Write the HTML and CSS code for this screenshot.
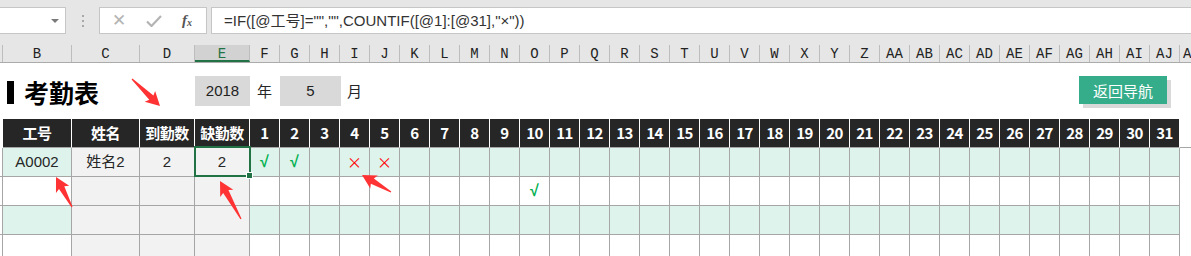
FILE: index.html
```html
<!DOCTYPE html>
<html lang="zh-CN">
<head>
    <meta charset="UTF-8">
    <meta name="viewport" content="width=device-width, initial-scale=1.0">
    <title>考勤表</title>
    <link rel="stylesheet" href="styles.css">
</head>
<body>
    <div class="formula-bar">
        <div class="name-box"><span class="drop"></span></div>
        <div class="grip"><i></i><i></i><i></i></div>
        <div class="fx-box">
            <span class="fx-btn">✕</span>
            <span class="fx-btn">
                <svg width="16" height="12" viewBox="0 0 16 12"><path d="M1 6.5 L5.5 11 L15 1" fill="none" stroke="#b4b4b4" stroke-width="2.2"/></svg>
            </span>
            <span class="fx-label">f<sub>x</sub></span>
        </div>
        <div class="formula">=IF([@工号]="","",COUNTIF([@1]:[@31],"×"))</div>
    </div>

    <div class="grid col-heads" id="col-heads"></div>

    <div class="grid title-row">
        <div class="title"><span class="title-mark"></span>考勤表</div>
        <div class="input-box year">2018</div>
        <div class="unit unit-year">年</div>
        <div class="input-box month">5</div>
        <div class="unit unit-month">月</div>
        <button class="nav-btn">返回导航</button>
    </div>

    <div class="grid sheet" id="sheet"></div>

    <svg class="arrows" width="1191" height="256">
        <g id="arrow-shape">
            <polygon points="0,0 -14,-7.5 -12,-3 -40,-0.6 -40,0.6 -12,3 -14,7.5" fill="#ff3333"/>
        </g>
    </svg>

    <script>
        const letters = ['A', 'B', 'C', 'D', 'E'];
        const abc = 'ABCDEFGHIJKLMNOPQRSTUVWXYZ';
        for (let i = 5; i < 37; i++) {
            letters.push(i < 26 ? abc[i] : 'A' + abc[i - 26]);
        }

        // column letters
        let heads = document.getElementById('col-heads');
        letters.forEach((l, i) => {
            let d = document.createElement('div');
            d.className = 'col-head' + (l === 'E' ? ' active' : '');
            d.textContent = i === 0 ? '' : (i === 36 ? 'A' : l);
            heads.appendChild(d);
        });

        // table data
        let rows = [
            { id: 'A0002', name: '姓名2', come: '2', miss: '2', days: { 1: '√', 2: '√', 4: '×', 5: '×' } },
            { days: { 10: '√' } },
            { days: {} },
            { days: {} }
        ];

        let sheet = document.getElementById('sheet');
        function cell(cls, text) {
            let d = document.createElement('div');
            d.className = 'cell ' + cls;
            if (text) d.textContent = text;
            sheet.appendChild(d);
            return d;
        }

        // header row
        cell('blank', '');
        ['工号', '姓名', '到勤数', '缺勤数'].forEach(t => cell('th', t));
        for (let day = 1; day <= 31; day++) cell('th', day);
        cell('blank head-tail', '');

        rows.forEach((r, i) => {
            let band = i % 2 === 0 ? 'band' : '';
            cell('td edge', '');
            cell('td ' + band, r.id || '');
            cell('td grey', r.name || '');
            cell('td grey', r.come || '');
            let miss = cell('td grey', r.miss || '');
            if (i === 0) miss.classList.add('selected');
            for (let day = 1; day <= 31; day++) {
                let mark = r.days[day] || '';
                let kind = mark === '√' ? ' ok' : mark === '×' ? ' no' : '';
                cell('td ' + band + kind, mark);
            }
            cell('blank', '');
        });

        // arrows: [tailX, tailY, tipX, tipY]
        let arrows = [[132, 79, 160, 106], [72, 207, 56, 177], [241, 219, 220, 181], [391, 192, 362, 175]];
        let svg = document.querySelector('.arrows');
        let proto = document.getElementById('arrow-shape');
        arrows.forEach(a => {
            let dx = a[2] - a[0], dy = a[3] - a[1];
            let len = Math.sqrt(dx * dx + dy * dy);
            let ang = Math.atan2(dy, dx) * 180 / Math.PI;
            let g = proto.cloneNode(true);
            g.removeAttribute('id');
            g.querySelector('polygon').setAttribute('points',
                `0,0 -14,-7.5 -12,-3 ${-len},-0.6 ${-len},0.6 -12,3 -14,7.5`);
            g.setAttribute('transform', `translate(${a[2]},${a[3]}) rotate(${ang})`);
            svg.appendChild(g);
        });
        proto.remove();
    </script>
</body>
</html>
```

FILE: styles.css
```css
body {
    margin: 0;
    width: 1191px;
    height: 256px;
    overflow: hidden;
    position: relative;
    background: #ffffff;
    font-family: "Liberation Sans", "Noto Sans CJK SC", sans-serif;
    color: #262626;
}

/* formula bar */
.formula-bar {
    display: flex;
    align-items: flex-start;
    height: 42px;
    padding-top: 7px;
    box-sizing: border-box;
    background: #e6e6e6;
}
.name-box {
    width: 67px;
    height: 27px;
    margin-left: -1px;
    box-sizing: border-box;
    background: #fff;
    border: 1px solid #c6c6c6;
    position: relative;
}
.drop {
    position: absolute;
    right: 6px;
    top: 11px;
    border-left: 4px solid transparent;
    border-right: 4px solid transparent;
    border-top: 4px solid #7a7a7a;
}
.grip {
    width: 33px;
    height: 27px;
    display: flex;
    flex-direction: column;
    align-items: center;
    justify-content: center;
    gap: 3px;
}
.grip i {
    width: 2px;
    height: 2px;
    background: #a8a8a8;
}
.fx-box {
    width: 108px;
    height: 27px;
    box-sizing: border-box;
    background: #fff;
    border: 1px solid #c6c6c6;
    display: flex;
    align-items: center;
    padding-left: 11px;
    gap: 19px;
}
.fx-btn {
    width: 16px;
    text-align: center;
    color: #b4b4b4;
    font-size: 17px;
    display: flex;
    align-items: center;
    justify-content: center;
}
.fx-label {
    font-family: "Liberation Serif", serif;
    font-style: italic;
    font-weight: bold;
    font-size: 15px;
    color: #555;
    margin-left: 1px;
}
.fx-label sub {
    font-size: 10px;
    vertical-align: -1px;
}
.formula {
    flex: 1;
    height: 27px;
    margin-left: 4px;
    box-sizing: border-box;
    background: #fff;
    border: 1px solid #c6c6c6;
    border-right: none;
    padding-left: 12px;
    font-size: 15px;
    line-height: 25px;
    color: #333;
}

/* shared column grid */
.grid {
    display: grid;
    grid-template-columns: 3px 69px 68px 55px 55px repeat(31, 30px) 11px;
}

/* column letters */
.col-heads {
    height: 21px;
    background: #e6e6e6;
    border-bottom: 1px solid #ababab;
    box-sizing: border-box;
}
.col-head {
    margin-top: 3px;
    height: 17px;
    border-right: 1px solid #bdbdbd;
    text-align: center;
    font-family: "Liberation Mono", monospace;
    font-size: 14px;
    line-height: 18px;
    color: #222;
    overflow: hidden;
}
.col-head:last-child {
    border-right: none;
    text-align: left;
    padding-left: 3px;
}
.col-head.active {
    background: #d2d2d2;
    color: #217346;
    border-bottom: 2px solid #217346;
    height: 15px;
}

/* title row */
.title-row {
    height: 56px;
    align-items: start;
}
.title {
    grid-column: 1 / 5;
    display: flex;
    align-items: center;
    margin-top: 15px;
    padding-left: 7px;
    font-family: "Noto Sans CJK SC", sans-serif;
    font-size: 25px;
    font-weight: bold;
    line-height: 28px;
    color: #000;
}
.title-mark {
    width: 7px;
    height: 23px;
    background: #000;
    margin-right: 10px;
}
.input-box {
    margin-top: 13px;
    height: 30px;
    background: #d9d9d9;
    text-align: center;
    font-size: 15px;
    line-height: 30px;
    color: #222;
}
.year {
    grid-column: 5 / 6;
}
.month {
    grid-column: 7 / 9;
    margin-right: -1px;
}
.unit {
    margin-top: 13px;
    line-height: 30px;
    font-family: "Noto Sans CJK SC", sans-serif;
    font-size: 15px;
    padding-left: 7px;
}
.unit-year {
    grid-column: 6 / 7;
}
.unit-month {
    grid-column: 9 / 10;
}
.nav-btn {
    grid-column: 33 / 37;
    justify-self: start;
    margin: 13px 0 0 19px;
    width: 88px;
    height: 28px;
    border: none;
    padding: 0;
    background: #35ad8a;
    color: #fff;
    font-family: "Noto Sans CJK SC", sans-serif;
    font-size: 15px;
    box-shadow: 4px 4px 0 #d9d9d9;
}

/* attendance table */
.cell {
    height: 29px;
    box-sizing: border-box;
    text-align: center;
    font-size: 15px;
    line-height: 28px;
    overflow: hidden;
    white-space: nowrap;
}
.th {
    background: #262626;
    color: #fff;
    font-family: "Noto Sans CJK SC", sans-serif;
    font-weight: bold;
    font-size: 15px;
    letter-spacing: -0.5px;
    border-right: 1px solid #fff;
    border-bottom: 1px solid #a6a6a6;
}
.head-tail {
    border-bottom: 1px solid #a6a6a6;
}
.td {
    border-right: 1px solid #a6a6a6;
    border-bottom: 1px solid #a6a6a6;
}
.band {
    background: #ddf3ec;
}
.grey {
    background: #f2f2f2;
}
.ok {
    color: #00b050;
    font-weight: bold;
    font-size: 16px;
}
.no {
    color: #ff0000;
    font-family: "Noto Sans CJK SC", sans-serif;
    font-size: 15px;
}
.selected {
    position: relative;
    overflow: visible;
}
.selected::after {
    content: "";
    position: absolute;
    top: -2px;
    left: -1px;
    right: -2px;
    bottom: -1px;
    border: 2px solid #217346;
}
.selected::before {
    content: "";
    position: absolute;
    right: -4px;
    bottom: -3px;
    width: 5px;
    height: 5px;
    background: #217346;
    border: 1px solid #fff;
    z-index: 1;
}

.arrows {
    position: absolute;
    top: 0;
    left: 0;
    pointer-events: none;
}
```
